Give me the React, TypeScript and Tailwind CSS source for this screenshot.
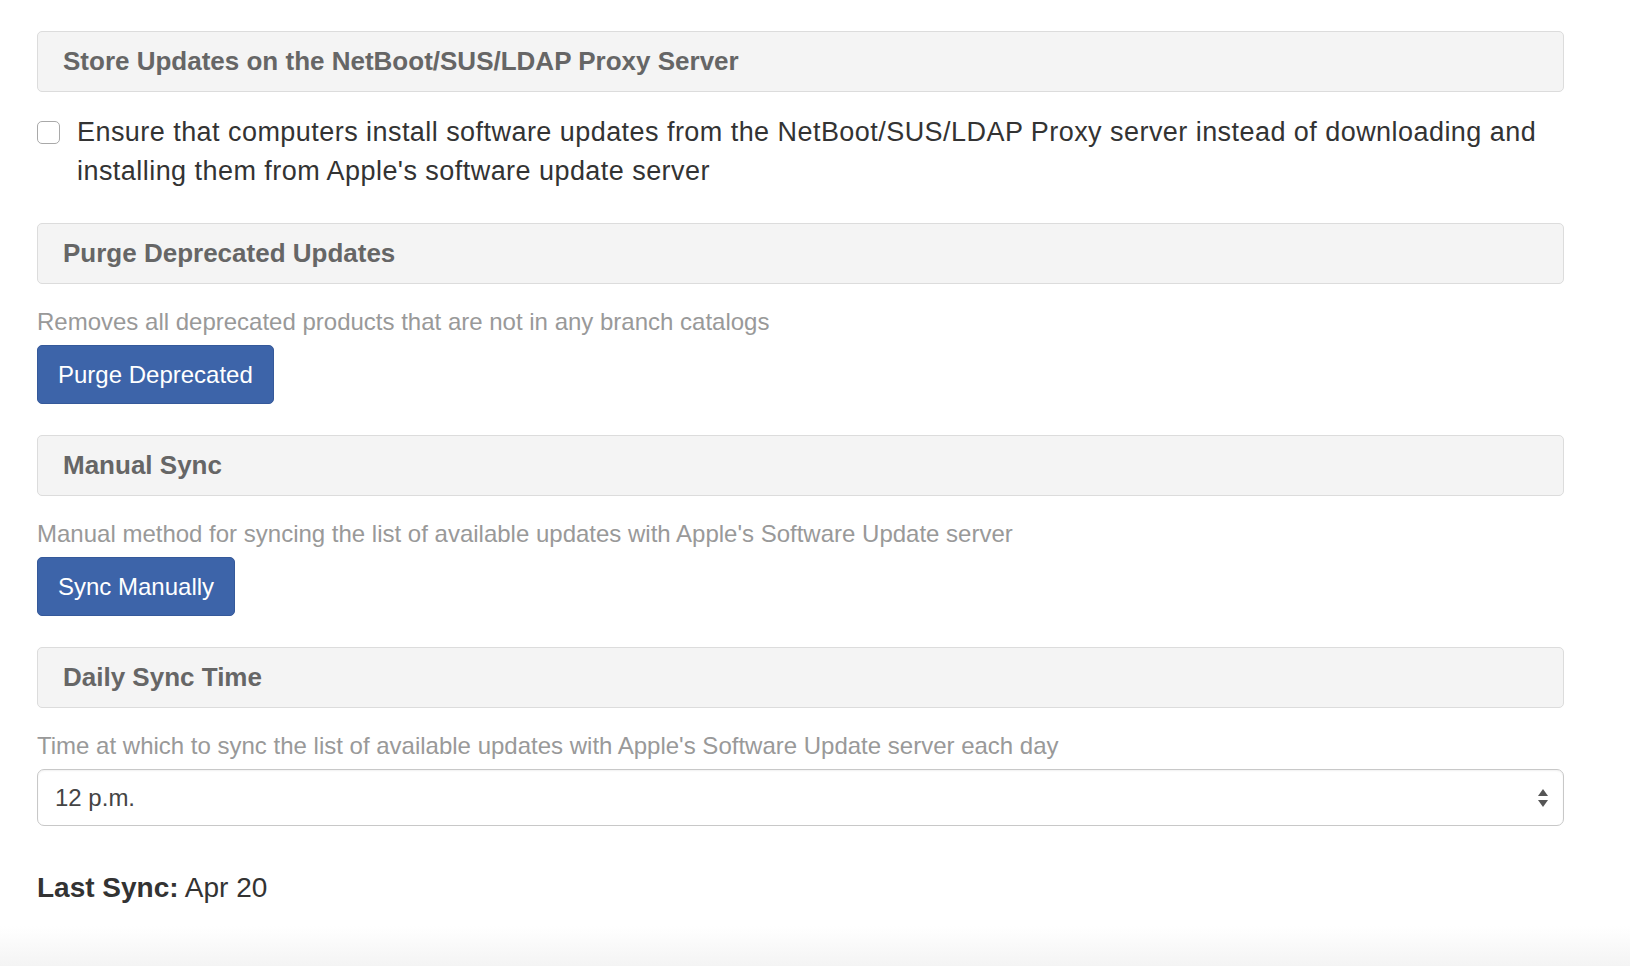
import React, { useState } from 'react';

const SectionHeader: React.FC<{ title: string; className?: string }> = ({ title, className = '' }) => (
  <div className={`h-[61px] flex items-center px-[25px] bg-[#f4f4f4] border border-[#dcdcdc] rounded-[5px] ${className}`}>
    <h3 className="text-[26px] font-bold text-[#666]">{title}</h3>
  </div>
);

const PrimaryButton: React.FC<{ label: string }> = ({ label }) => (
  <button className="h-[59px] px-[20px] bg-[#3d64a9] text-white text-[24px] rounded-[5px] border border-[#35599a]">
    {label}
  </button>
);

const App: React.FC = () => {
  const [storeLocal, setStoreLocal] = useState(false);
  const [syncTime, setSyncTime] = useState('12');

  return (
    <div className="min-h-[966px] bg-white font-['Liberation_Sans',Arial,sans-serif] relative overflow-hidden">
      <div className="ml-[37px] w-[1527px] pt-[31px]">
        <SectionHeader title="Store Updates on the NetBoot/SUS/LDAP Proxy Server" />

        <label className="flex items-start mt-[21px] cursor-pointer">
          <input
            type="checkbox"
            checked={storeLocal}
            onChange={(e) => setStoreLocal(e.target.checked)}
            className="appearance-none shrink-0 mt-[8px] w-[23px] h-[23px] border border-[#a9a9a9] rounded-[5px] bg-white"
          />
          <span className="ml-[17px] text-[27px] leading-[39px] tracking-[0.45px] text-[#333]">
            Ensure that computers install software updates from the NetBoot/SUS/LDAP Proxy server instead of downloading and installing them from Apple's software update server
          </span>
        </label>

        <SectionHeader title="Purge Deprecated Updates" className="mt-[32px]" />
        <p className="mt-[22px] text-[24px] leading-[31px] text-[#999]">
          Removes all deprecated products that are not in any branch catalogs
        </p>
        <div className="mt-[8px]">
          <PrimaryButton label="Purge Deprecated" />
        </div>

        <SectionHeader title="Manual Sync" className="mt-[31px]" />
        <p className="mt-[22px] text-[24px] leading-[31px] text-[#999]">
          Manual method for syncing the list of available updates with Apple's Software Update server
        </p>
        <div className="mt-[8px]">
          <PrimaryButton label="Sync Manually" />
        </div>

        <SectionHeader title="Daily Sync Time" className="mt-[31px]" />
        <p className="mt-[22px] text-[24px] leading-[31px] text-[#999]">
          Time at which to sync the list of available updates with Apple's Software Update server each day
        </p>
        <div className="relative mt-[8px]">
          <select
            value={syncTime}
            onChange={(e) => setSyncTime(e.target.value)}
            className="appearance-none w-full h-[57px] pl-[17px] pr-[40px] text-[24px] text-[#444] bg-white border border-[#c8c8c8] rounded-[7px] shadow-[inset_0_1px_2px_rgba(0,0,0,0.06)]"
          >
            <option value="12">12 p.m.</option>
            <option value="1">1 a.m.</option>
            <option value="6">6 a.m.</option>
          </select>
          <svg className="absolute right-[15px] top-[17px] pointer-events-none" width="12" height="24" viewBox="0 0 12 24">
            <path d="M6 3 L11 10 L1 10 Z" fill="#555" />
            <path d="M6 21 L11 14 L1 14 Z" fill="#555" />
          </svg>
        </div>

        <p className="mt-[46px] text-[28px] leading-[32px] text-[#333]">
          <span className="font-bold">Last Sync:</span> Apr 20
        </p>
      </div>
      <div className="absolute left-0 right-0 bottom-0 h-[40px] bg-gradient-to-b from-white to-[#f4f4f4]" />
    </div>
  );
};

export default App;
